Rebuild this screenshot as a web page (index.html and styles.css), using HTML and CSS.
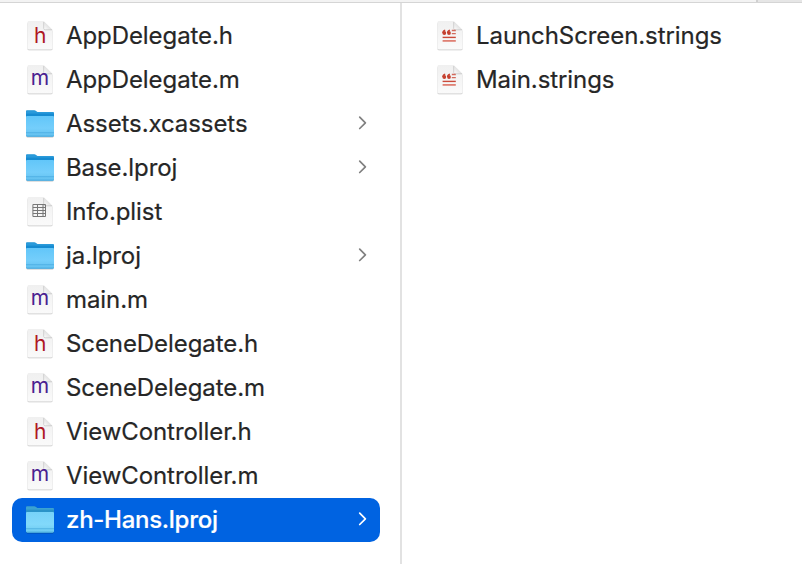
FILE: index.html
```
<!DOCTYPE html>
<html lang="en">
<head>
<meta charset="utf-8">
<title>Files</title>
<link rel="stylesheet" href="styles.css">
</head>
<body>
<svg class="defs" width="0" height="0">
  <defs>
    <linearGradient id="paper" x1="0" y1="0" x2="0" y2="1"><stop offset="0" stop-color="#f0f0f0"/><stop offset="1" stop-color="#fafafa"/></linearGradient>
    <linearGradient id="fold" x1="0" y1="1" x2="1" y2="0"><stop offset="0" stop-color="#ffffff"/><stop offset=".5" stop-color="#e2e2e2"/></linearGradient>
    <linearGradient id="front" x1="0" y1="0" x2="0" y2="1"><stop offset="0" stop-color="#62c6f9"/><stop offset=".6" stop-color="#74cefb"/><stop offset="1" stop-color="#62c0ef"/></linearGradient>
    <linearGradient id="front-sel" x1="0" y1="0" x2="0" y2="1"><stop offset="0" stop-color="#76d2f9"/><stop offset=".6" stop-color="#82d9fb"/><stop offset="1" stop-color="#6bcaf0"/></linearGradient>
    <filter id="shadow" x="-10%" y="-10%" width="120%" height="125%"><feDropShadow dx="0" dy=".6" stdDeviation=".6" flood-color="#000" flood-opacity=".42"/></filter>
  </defs>
  <symbol id="doc" viewBox="0 0 32 32">
    <path d="M5 1.2H19.7L28.5 10V27.8A1.5 1.5 0 0 1 27 29.3H5A1.5 1.5 0 0 1 3.5 27.8V2.7A1.5 1.5 0 0 1 5 1.2Z" fill="url(#paper)" filter="url(#shadow)"/>
    <path d="M19.7 1.2L28.5 10H21.2A1.5 1.5 0 0 1 19.7 8.5Z" fill="url(#fold)"/>
    <path d="M19.7 2V8.5A1.5 1.5 0 0 0 21.2 9.8H28" fill="none" stroke="#c6c6c6" stroke-width=".8"/>
  </symbol>
  <symbol id="plist" viewBox="0 0 32 32"><use href="#doc"/>
    <path d="M8.9 8.5H21.5V20.5H8.9ZM8.9 11.5H21.5M8.9 14.5H21.5M8.9 17.5H21.5M13.5 8.5V20.5M19 8.5V20.5" fill="none" stroke="#777" stroke-width="1"/>
  </symbol>
  <symbol id="strings" viewBox="0 0 32 32"><use href="#doc"/>
    <g fill="#c5402f"><circle cx="10.3" cy="13" r="1.9"/><circle cx="15" cy="13" r="1.9"/></g>
    <path d="M8.9 13Q8.9 10.8 11.2 10.2M13.6 13Q13.6 10.8 15.9 10.2" fill="none" stroke="#c5402f" stroke-width="1.3"/>
    <path d="M17.8 10.5H21.8M17.8 13.7H21.8" fill="none" stroke="#d26a5c" stroke-width="1.3"/>
    <path d="M8.6 17.4H21.8" stroke="#cb4a3a" stroke-width="1.4"/>
    <path d="M8.6 20.9H21.8" stroke="#df8074" stroke-width="1.8"/>
  </symbol>
  <symbol id="folder" viewBox="0 0 32 32">
    <path d="M3 2.2H10.2Q11.2 2.2 12 2.9L13.4 4H29Q30 4 30 5V27Q30 28.4 28.6 28.4H3.4Q2 28.4 2 27V3.2Q2 2.2 3 2.2Z" fill="#2a9ada" filter="url(#shadow)"/>
    <path d="M2 5.6H30V10H2Z" fill="#168bd1"/>
    <path d="M3 8H29Q30 8 30 9V27Q30 28.4 28.6 28.4H3.4Q2 28.4 2 27V9Q2 8 3 8Z" fill="url(#front)"/>
    <path d="M2 24.7H30M2.6 28H29.4" stroke="#45a9df" stroke-width=".7"/>
  </symbol>
  <symbol id="folder-sel" viewBox="0 0 32 32">
    <path d="M3 2.2H10.2Q11.2 2.2 12 2.9L13.4 4H29Q30 4 30 5V27Q30 28.4 28.6 28.4H3.4Q2 28.4 2 27V3.2Q2 2.2 3 2.2Z" fill="#3aa2d2" filter="url(#shadow)"/>
    <path d="M2 5.6H30V10H2Z" fill="#2a93c8"/>
    <path d="M3 8H29Q30 8 30 9V27Q30 28.4 28.6 28.4H3.4Q2 28.4 2 27V9Q2 8 3 8Z" fill="url(#front-sel)"/>
    <path d="M2 24.7H30M2.6 28H29.4" stroke="#48abdb" stroke-width=".7"/>
  </symbol>
  <symbol id="chevron" viewBox="0 0 10 16"><path d="M1.7 2.1L7.4 7.8L1.7 13.5" fill="none" stroke="currentColor" stroke-width="1.7" stroke-linecap="round" stroke-linejoin="round"/></symbol>
</svg>
<div class="toolbar"><div class="toolbar-end"></div></div>
<main class="browser">
  <ul class="column">
    <li class="row"><svg class="icon"><use href="#doc"/><text class="glyph glyph-h" x="16.1" y="23.2">h</text></svg><span class="name">AppDelegate.h</span></li>
    <li class="row"><svg class="icon"><use href="#doc"/><text class="glyph glyph-m" x="16" y="21.2">m</text></svg><span class="name">AppDelegate.m</span></li>
    <li class="row"><svg class="icon"><use href="#folder"/></svg><span class="name">Assets.xcassets</span><svg class="chevron"><use href="#chevron"/></svg></li>
    <li class="row"><svg class="icon"><use href="#folder"/></svg><span class="name">Base.lproj</span><svg class="chevron"><use href="#chevron"/></svg></li>
    <li class="row"><svg class="icon"><use href="#plist"/></svg><span class="name">Info.plist</span></li>
    <li class="row"><svg class="icon"><use href="#folder"/></svg><span class="name">ja.lproj</span><svg class="chevron"><use href="#chevron"/></svg></li>
    <li class="row"><svg class="icon"><use href="#doc"/><text class="glyph glyph-m" x="16" y="21.2">m</text></svg><span class="name">main.m</span></li>
    <li class="row"><svg class="icon"><use href="#doc"/><text class="glyph glyph-h" x="16.1" y="23.2">h</text></svg><span class="name">SceneDelegate.h</span></li>
    <li class="row"><svg class="icon"><use href="#doc"/><text class="glyph glyph-m" x="16" y="21.2">m</text></svg><span class="name">SceneDelegate.m</span></li>
    <li class="row"><svg class="icon"><use href="#doc"/><text class="glyph glyph-h" x="16.1" y="23.2">h</text></svg><span class="name">ViewController.h</span></li>
    <li class="row"><svg class="icon"><use href="#doc"/><text class="glyph glyph-m" x="16" y="21.2">m</text></svg><span class="name">ViewController.m</span></li>
    <li class="row selected"><svg class="icon"><use href="#folder-sel"/></svg><span class="name">zh-Hans.lproj</span><svg class="chevron"><use href="#chevron"/></svg></li>
  </ul>
  <ul class="column detail">
    <li class="row"><svg class="icon"><use href="#strings"/></svg><span class="name">LaunchScreen.strings</span></li>
    <li class="row"><svg class="icon"><use href="#strings"/></svg><span class="name">Main.strings</span></li>
  </ul>
</main>
</body>
</html>
```
FILE: styles.css
```
* { box-sizing: border-box; }
body {
  margin: 0;
  height: 564px;
  overflow: hidden;
  display: flex;
  flex-direction: column;
  background: #fff;
  color: #262626;
  font-family: Inter, "Liberation Sans", sans-serif;
}
.defs { position: absolute; }
.toolbar {
  height: 3px;
  flex: none;
  display: flex;
  justify-content: flex-end;
  background: #f3f3f3;
  border-bottom: 1px solid #d5d5d5;
}
.toolbar-end { width: 46px; background: #e6e6e6; border-left: 2px solid #d0d0d0; }
.browser { flex: 1; display: flex; }
.column {
  width: 402px;
  margin: 0;
  padding: 11px 20px 0 12px;
  list-style: none;
  border-right: 2px solid #e2e2e2;
}
.detail { width: 400px; border: 0; padding-left: 20px; }
.row {
  height: 44px;
  display: flex;
  align-items: center;
  padding: 0 12px;
  border-radius: 10px;
}
.icon { width: 32px; height: 32px; flex: none; }
.name {
  flex: 1;
  margin-left: 10px;
  font-size: 24px;
  line-height: 44px;
  white-space: nowrap;
  letter-spacing: -0.08px;
  -webkit-text-stroke: 0.2px currentColor;
}
.chevron { width: 10px; height: 16px; color: #808080; margin: 0 0 2px; }
.selected { background: #0063e1; color: #fff; }
.selected .chevron { color: #fff; }
.selected .name { font-weight: 500; letter-spacing: -0.28px; }
.glyph { font-family: Inter, sans-serif; text-anchor: middle; }
.glyph-h { font-size: 21px; fill: #ae1723; }
.glyph-m { font-size: 21px; fill: #4b2190; }
```
